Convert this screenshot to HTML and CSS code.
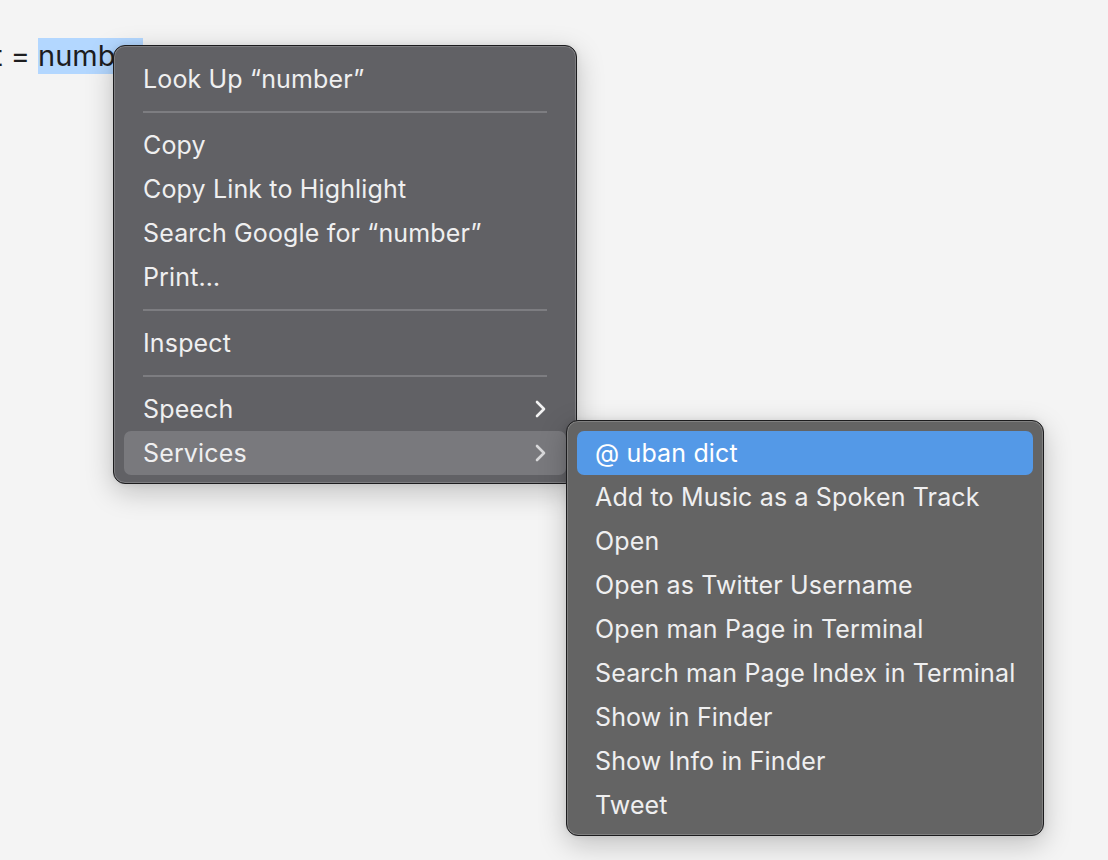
FILE: index.html
```html
<!DOCTYPE html>
<html>
<head>
<meta charset="utf-8">
<link rel="stylesheet" href="styles.css">
</head>
<body>
<div class="doc">
  <p class="code-line">t = <span class="sel">number</span></p>
</div>

<div class="menu main-menu">
  <div class="item">Look Up “number”</div>
  <div class="sep"></div>
  <div class="item">Copy</div>
  <div class="item">Copy Link to Highlight</div>
  <div class="item">Search Google for “number”</div>
  <div class="item">Print…</div>
  <div class="sep"></div>
  <div class="item">Inspect</div>
  <div class="sep"></div>
  <div class="item sub"><span>Speech</span>
    <svg class="chev" width="14" height="18" viewBox="0 0 14 18"><path d="M3 2 L10 9 L3 16" fill="none" stroke="#f2f2f2" stroke-width="2.6" stroke-linecap="round" stroke-linejoin="round"/></svg>
  </div>
  <div class="item sub open"><span>Services</span>
    <svg class="chev" width="14" height="18" viewBox="0 0 14 18"><path d="M3 2 L10 9 L3 16" fill="none" stroke="#d8d8da" stroke-width="2.6" stroke-linecap="round" stroke-linejoin="round"/></svg>
  </div>
</div>

<div class="menu sub-menu">
  <div class="item active">@ uban dict</div>
  <div class="item">Add to Music as a Spoken Track</div>
  <div class="item">Open</div>
  <div class="item">Open as Twitter Username</div>
  <div class="item">Open man Page in Terminal</div>
  <div class="item">Search man Page Index in Terminal</div>
  <div class="item">Show in Finder</div>
  <div class="item">Show Info in Finder</div>
  <div class="item">Tweet</div>
</div>
</body>
</html>
```
FILE: styles.css
```css
html, body {
  margin: 0;
  padding: 0;
  width: 1108px;
  height: 860px;
  overflow: hidden;
  background: #f4f4f4;
}

.doc {
  padding-top: 38px;
  margin-left: -7px;
}

.code-line {
  margin: 0;
  font-family: "Inter", "Liberation Sans", sans-serif;
  font-size: 29px;
  line-height: 36px;
  color: #1d1d1f;
  white-space: nowrap;
}

.sel {
  display: inline-block;
  line-height: 36px;
  background: #b3d7ff;
}

.menu {
  position: absolute;
  box-sizing: border-box;
  border: 1px solid #1c1c1e;
  border-radius: 12px;
  box-shadow: inset 0 0 0 1px rgba(255, 255, 255, 0.18), 0 8px 28px rgba(0, 0, 0, 0.22), 0 0 6px rgba(0, 0, 0, 0.08);
  font-family: "Inter", "Liberation Sans", sans-serif;
  font-size: 25px;
  letter-spacing: 0.15px;
  color: #efeff0;
  display: flex;
  flex-direction: column;
}

.main-menu {
  left: 113px;
  top: 45px;
  width: 464px;
  padding: 11px 10px 8px 10px;
  background: #616165;
}

.sub-menu {
  left: 566px;
  top: 420px;
  width: 478px;
  padding: 10px 10px 8px 10px;
  background: #646464;
}

.item {
  height: 44px;
  display: flex;
  align-items: center;
  justify-content: space-between;
  padding: 0 19px;
  border-radius: 7px;
  white-space: nowrap;
}

.sub-menu .item {
  padding: 0 18px;
}

.item.open {
  background: #79797d;
}

.item.active {
  background: #5499e7;
  color: #ffffff;
}

.chev {
  display: block;
  margin-right: -1px;
}

.sep {
  height: 2px;
  margin: 10px 19px;
  background: #7d7d81;
}
```
